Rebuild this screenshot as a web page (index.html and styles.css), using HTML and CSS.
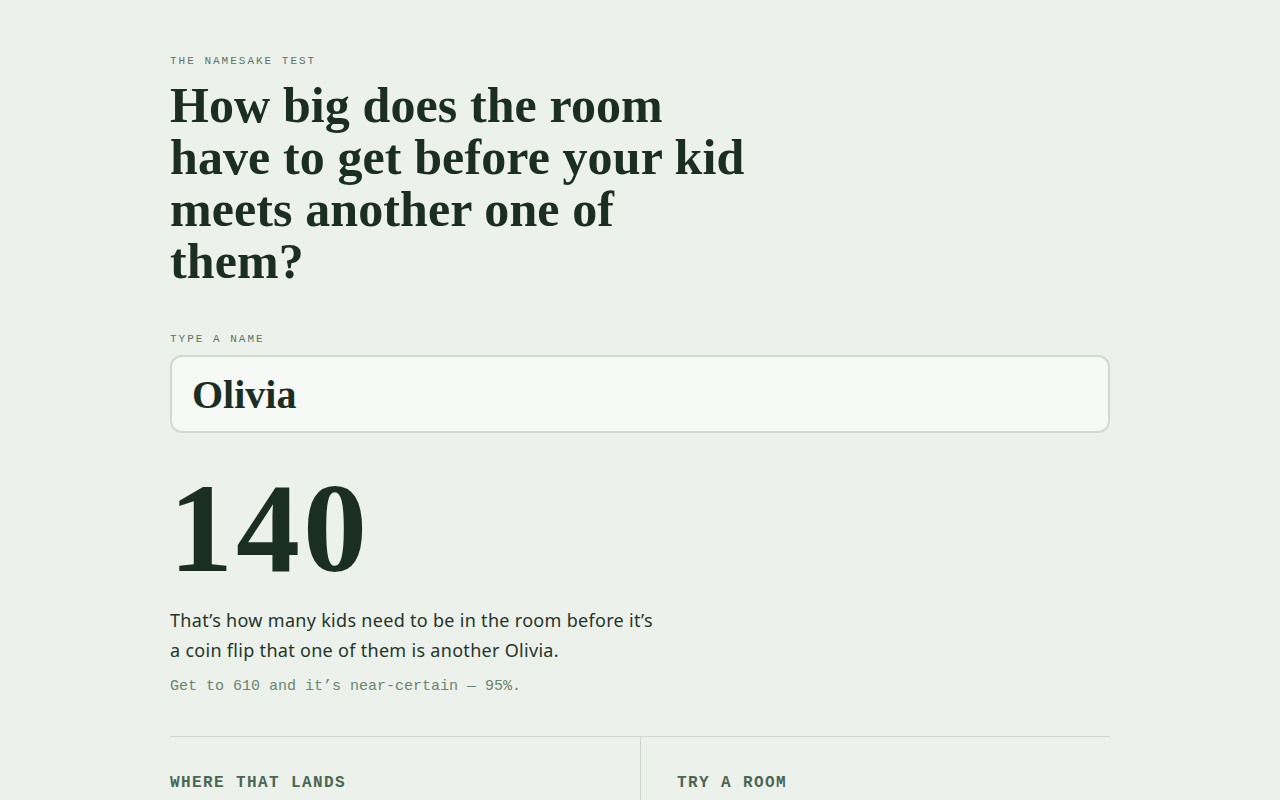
FILE: index.html
```html
<!DOCTYPE html>
<html>
<head>
  <title>The Namesake Test</title>
  <link rel="stylesheet" href="styles.css">
</head>
<body>
  <main class="page">
    <p class="eyebrow">The namesake test</p>
    <h1 class="headline">How big does the room<br>have to get before your kid<br>meets another one of<br>them?</h1>

    <label class="field-label" for="name">Type a name</label>
    <input class="name-input" type="text" id="name" value="Olivia">

    <div class="result">
      <div class="big-number">140</div>
      <p class="explain">That’s how many kids need to be in the room before it’s a coin flip that one of them is another Olivia.</p>
      <p class="note">Get to 610 and it’s near-certain — 95%.</p>
    </div>

    <section class="panels">
      <div class="panel">
        <h3 class="panel-title">Where that lands</h3>
      </div>
      <div class="panel">
        <h3 class="panel-title">Try a room</h3>
      </div>
    </section>
  </main>
</body>
</html>
```

FILE: styles.css
```css
body {
  margin: 0;
  background-color: #ecf1eb;
  color: #1b2e22;
  font-family: "Noto Sans", sans-serif;
}

.page {
  width: 940px;
  margin: 0 auto;
  padding-top: 55px;
}

.eyebrow,
.field-label {
  margin: 0;
  font-family: "Liberation Mono", monospace;
  font-size: 11px;
  letter-spacing: 2px;
  text-transform: uppercase;
  color: #5f7464;
}

.headline {
  width: 640px;
  margin: 12px 0 0;
  font-family: "Liberation Serif", serif;
  font-weight: bold;
  font-size: 50px;
  line-height: 52px;
  letter-spacing: 0.1px;
}

.field-label {
  display: block;
  margin-top: 46px;
}

.name-input {
  display: block;
  box-sizing: border-box;
  width: 100%;
  height: 78px;
  margin-top: 10px;
  padding: 0 20px;
  border: 2px solid #d3d9d1;
  border-radius: 12px;
  background-color: #f6f9f5;
  color: #1b2e22;
  font-family: "Liberation Serif", serif;
  font-weight: bold;
  font-size: 40px;
  outline: none;
}

.result {
  margin-top: 35px;
}

.big-number {
  font-family: "Liberation Serif", serif;
  font-weight: bold;
  font-size: 128px;
  line-height: 120px;
  letter-spacing: 3px;
  margin-left: -1px;
}

.explain {
  width: 490px;
  margin: 17px 0 0;
  font-size: 18px;
  line-height: 30px;
  letter-spacing: 0.3px;
  color: #24352a;
}

.note {
  margin: 12px 0 0;
  font-family: "Liberation Mono", monospace;
  font-size: 15px;
  line-height: 20px;
  color: #6b8470;
}

.panels {
  display: grid;
  grid-template-columns: 1fr 1fr;
  margin-top: 39px;
  border-top: 1px solid #d0d7ce;
}

.panel {
  padding: 37px 0 0;
  min-height: 200px;
}

.panel + .panel {
  border-left: 1px solid #d0d7ce;
  padding-left: 36px;
}

.panel-title {
  margin: 0;
  font-family: "Liberation Mono", monospace;
  font-weight: bold;
  font-size: 16px;
  letter-spacing: 1.4px;
  text-transform: uppercase;
  color: #4d6653;
}
```
